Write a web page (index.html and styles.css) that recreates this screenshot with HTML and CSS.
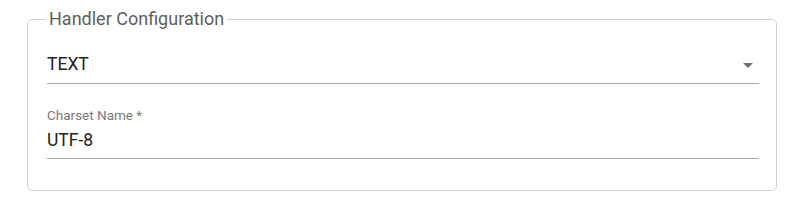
FILE: index.html
```html
<!DOCTYPE html>
<html lang="en">
<head>
    <meta charset="UTF-8">
    <meta name="viewport" content="width=device-width, initial-scale=1.0">
    <title>Handler Configuration</title>
    <link rel="stylesheet" href="styles.css">
</head>
<body>
    <div class="wrapper">
        <fieldset class="config-box">
            <legend>Handler Configuration</legend>

            <!-- handler type -->
            <div class="select-field">
                <span class="value">TEXT</span>
                <svg class="arrow" viewBox="0 0 24 24" width="24" height="24">
                    <path d="M7 10l5 5 5-5z"></path>
                </svg>
            </div>

            <!-- charset -->
            <div class="text-field">
                <label>Charset Name *</label>
                <div class="input">UTF-8</div>
            </div>
        </fieldset>
    </div>
</body>
</html>
```

FILE: styles.css
```css
body {
    margin: 0;
    padding: 0;
    background: #ffffff;
    font-family: 'Roboto', 'Liberation Sans', sans-serif;
}

.wrapper {
    padding: 9px 23px 0 27px;
}

.config-box {
    width: 750px;
    box-sizing: border-box;
    margin: 0;
    border: 1px solid #cfcfcf;
    border-radius: 5px;
    padding: 0 17px 31px 19px;
}

.config-box legend {
    font-size: 18px;
    line-height: 20px;
    color: #5e5e5e;
    padding: 0 3px;
    margin-left: -1px;
}

.select-field {
    display: flex;
    align-items: center;
    margin-top: 22px;
    padding-bottom: 6px;
    border-bottom: 1px solid #a8a8a8;
}

.select-field .value {
    flex: 1;
    font-size: 17.5px;
    line-height: 24px;
    color: #212121;
}

.select-field .arrow {
    fill: #6f6f6f;
    margin-right: -1px;
    margin-top: 2px;
}

.text-field {
    margin-top: 23px;
}

.text-field label {
    display: block;
    font-size: 13.5px;
    line-height: 16px;
    color: #7a7a7a;
    margin-bottom: 5px;
}

.text-field .input {
    font-size: 17.5px;
    line-height: 24px;
    color: #212121;
    padding-bottom: 6px;
    border-bottom: 1px solid #a8a8a8;
}
```
